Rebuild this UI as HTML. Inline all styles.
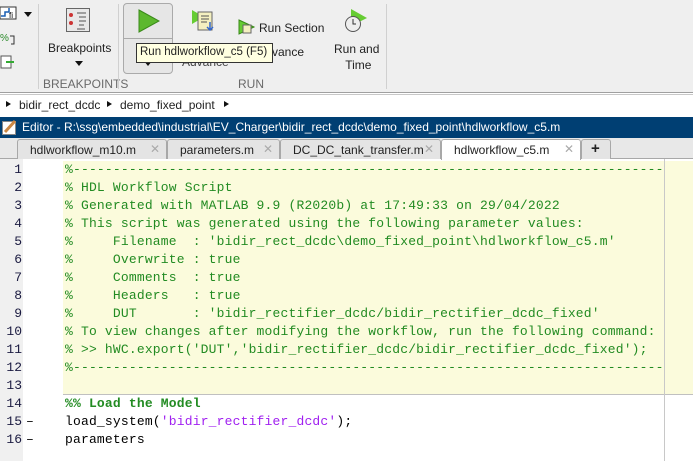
<!DOCTYPE html>
<html><head><meta charset="utf-8"><style>
*{margin:0;padding:0;box-sizing:border-box}
body{width:693px;height:461px;overflow:hidden;background:#fff;font-family:"Liberation Sans",sans-serif;position:relative}
.a{position:absolute}
.rib{left:0;top:0;width:693px;height:92px;background:#efefef}
.t{font-size:12px;color:#222;white-space:nowrap}
.sec{font-size:12px;color:#6a6a6a;white-space:nowrap}
.code{font-family:"Liberation Mono",monospace;font-size:13px;white-space:pre;line-height:18px;letter-spacing:0.18px}
.c{color:#228b22}.s{color:#a020f0}.k{color:#000}
.ln{font-family:"Liberation Mono",monospace;font-size:13px;line-height:18px;color:#1a1a40;text-align:right;width:22px}
.tab{top:139px;height:20px;border:1px solid #a8a8a8;border-bottom:none;border-radius:3px 3px 0 0;background:#e4e4e4;font-size:12px;color:#222;padding:3px 0 0 12px;white-space:nowrap}
.x{position:absolute;right:6px;top:2px;color:#aaa;font-size:12px}
</style></head><body>
<div class="a rib"></div>
<div class="a" style="left:0;top:92px;width:693px;height:1px;background:#a0a0a0"></div>
<div class="a" style="left:0;top:94px;width:693px;height:1px;background:#c8c8c8"></div>
<svg class="a" style="left:0;top:4px" width="30" height="70"><rect x="0" y="3" width="16" height="12" fill="#fff" stroke="#333"/><path d="M1 12h4v-4h4v-4" stroke="#1a5fb4" fill="none" stroke-width="1.5"/><text x="9" y="14" font-size="8" font-family="Liberation Sans">fi</text><text x="0" y="37" font-size="10" fill="#2a8a2a" font-family="Liberation Sans">%</text><path d="M10 32h4v8h-3" stroke="#333" fill="none"/><rect x="1" y="52" width="10" height="12" fill="#fff" stroke="#555"/><path d="M6 58h8" stroke="#3a3" stroke-width="2"/></svg>
<div class="a" style="left:24px;top:12px;border:4px solid transparent;border-top:5px solid #111"></div>
<div class="a" style="left:38px;top:4px;width:1px;height:85px;background:#d0d0d0"></div>
<svg class="a" style="left:66px;top:8px" width="24" height="24"><rect x="0.5" y="0.5" width="23" height="23" fill="#e8e8e8" stroke="#666"/><circle cx="5" cy="7" r="2" fill="#c33"/><circle cx="5" cy="15" r="2" fill="#c33"/><path d="M11 5h9M13 9h7M13 13h7M13 17h5M11 21h8" stroke="#555"/></svg>
<div class="a t" style="left:48px;top:41px">Breakpoints</div>
<div class="a" style="left:75px;top:61px;border:4px solid transparent;border-top:5px solid #111"></div>
<div class="a sec" style="left:43px;top:77px">BREAKPOINTS</div>
<div class="a" style="left:118px;top:4px;width:1px;height:85px;background:#d0d0d0"></div>
<div class="a" style="left:123px;top:3px;width:50px;height:71px;border:1px solid #aaa;border-radius:4px;background:#e6e6e6"></div>
<div class="a" style="left:124px;top:38px;width:48px;height:1px;background:#aaa"></div>
<svg class="a" style="left:138px;top:9px" width="22" height="24"><path d="M1 1L21 12L1 23Z" fill="#5cb82e" stroke="#3a8a1a"/></svg>
<div class="a" style="left:144px;top:61px;border:4px solid transparent;border-top:5px solid #111"></div>
<svg class="a" style="left:190px;top:8px" width="28" height="26"><path d="M2 2L14 9L2 16Z" fill="#6c3"/><rect x="8" y="4" width="14" height="18" fill="#f4f0c0" stroke="#666"/><path d="M11 8h8M11 11h8M11 14h6" stroke="#555"/><path d="M20 14v8M17 19l3 3l3-3" stroke="#36c" fill="none" stroke-width="1.5"/></svg>
<div class="a t" style="left:182px;top:55px;color:#444">Advance</div>
<svg class="a" style="left:238px;top:19px" width="18" height="16"><path d="M1 1L16 8L1 15Z" fill="#6c3" stroke="#3a8a1a"/><rect x="5" y="6" width="8" height="8" fill="#f4f0c0" stroke="#666"/></svg>
<div class="a t" style="left:259px;top:21px">Run Section</div>
<div class="a" style="left:238px;top:43px;width:14px;height:14px;background:#8c4"></div>
<div class="a t" style="left:272px;top:45px">vance</div>
<svg class="a" style="left:343px;top:8px" width="26" height="26"><path d="M8 1L24 10L8 18Z" fill="#6c3"/><circle cx="10" cy="16" r="7.5" fill="#eee" stroke="#555"/><path d="M10 11v5h3" stroke="#333" fill="none"/></svg>
<div class="a t" style="left:334px;top:41px;text-align:center;line-height:16px">Run and<br>&nbsp;Time</div>
<div class="a sec" style="left:238px;top:77px">RUN</div>
<div class="a" style="left:386px;top:4px;width:1px;height:85px;background:#d0d0d0"></div>
<div class="a t" style="left:136px;top:43px;width:137px;height:20px;background:#ffffe1;border:1px solid #333;padding:2px 0 0 3px;font-size:11.5px">Run hdlworkflow_c5 (F5)</div>
<div class="a" style="left:6px;top:101px;border:3px solid transparent;border-left:5px solid #111"></div>
<div class="a t" style="left:19px;top:98px;font-size:12px">bidir_rect_dcdc</div>
<div class="a" style="left:107px;top:101px;border:3px solid transparent;border-left:5px solid #111"></div>
<div class="a t" style="left:120px;top:98px;font-size:12px">demo_fixed_point</div>
<div class="a" style="left:224px;top:101px;border:3px solid transparent;border-left:5px solid #111"></div>
<div class="a" style="left:0;top:117px;width:693px;height:21px;background:#003f73"></div>
<svg class="a" style="left:2px;top:119px" width="16" height="16"><rect x="0.5" y="2.5" width="13" height="13" fill="#fff" stroke="#888"/><path d="M3 13L13 2" stroke="#c84" stroke-width="3"/></svg>
<div class="a t" style="left:22px;top:120px;color:#fff;font-size:12px">Editor - R:\ssg\embedded\industrial\EV_Charger\bidir_rect_dcdc\demo_fixed_point\hdlworkflow_c5.m</div>
<div class="a" style="left:0;top:138px;width:693px;height:21px;background:#e8e8e8"></div>
<div class="a" style="left:0;top:158px;width:693px;height:1px;background:#a8a8a8"></div>
<div class="a tab" style="left:17px;width:150px">hdlworkflow_m10.m<span class="x">✕</span></div>
<div class="a tab" style="left:167px;width:113px">parameters.m<span class="x">✕</span></div>
<div class="a tab" style="left:280px;width:161px">DC_DC_tank_transfer.m<span class="x">✕</span></div>
<div class="a tab" style="left:441px;width:140px;background:#fff;height:21px">hdlworkflow_c5.m<span class="x">✕</span></div>
<div class="a tab" style="left:581px;width:30px;font-weight:bold;font-size:15px;padding:0 0 0 9px">+</div>
<div class="a" style="left:0;top:159px;width:23px;height:302px;background:#f0f0f0"></div>
<div class="a" style="left:63px;top:161px;width:630px;height:234px;background:#fbfbdc"></div>
<div class="a" style="left:63px;top:394px;width:630px;height:1px;background:#c0c0c0"></div>
<div class="a" style="left:664px;top:159px;width:1px;height:302px;background:#c8c8c8"></div>
<div class="a ln" style="left:0;top:161px">1<br>2<br>3<br>4<br>5<br>6<br>7<br>8<br>9<br>10<br>11<br>12<br>13<br>14<br>15<br>16</div>
<div class="a code" style="left:26px;top:161px;color:#000">&nbsp;<br>&nbsp;<br>&nbsp;<br>&nbsp;<br>&nbsp;<br>&nbsp;<br>&nbsp;<br>&nbsp;<br>&nbsp;<br>&nbsp;<br>&nbsp;<br>&nbsp;<br>&nbsp;<br>&nbsp;<br>–<br>–</div>
<div class="a code" style="left:65px;top:161px"><span class="c">%--------------------------------------------------------------------------
% HDL Workflow Script
% Generated with MATLAB 9.9 (R2020b) at 17:49:33 on 29/04/2022
% This script was generated using the following parameter values:
%     Filename  : 'bidir_rect_dcdc\demo_fixed_point\hdlworkflow_c5.m'
%     Overwrite : true
%     Comments  : true
%     Headers   : true
%     DUT       : 'bidir_rectifier_dcdc/bidir_rectifier_dcdc_fixed'
% To view changes after modifying the workflow, run the following command:
% &gt;&gt; hWC.export('DUT','bidir_rectifier_dcdc/bidir_rectifier_dcdc_fixed');
%--------------------------------------------------------------------------</span>

<span class="c"><b>%% Load the Model</b></span>
load_system(<span class="s">'bidir_rectifier_dcdc'</span>);
parameters</div>
</body></html>
